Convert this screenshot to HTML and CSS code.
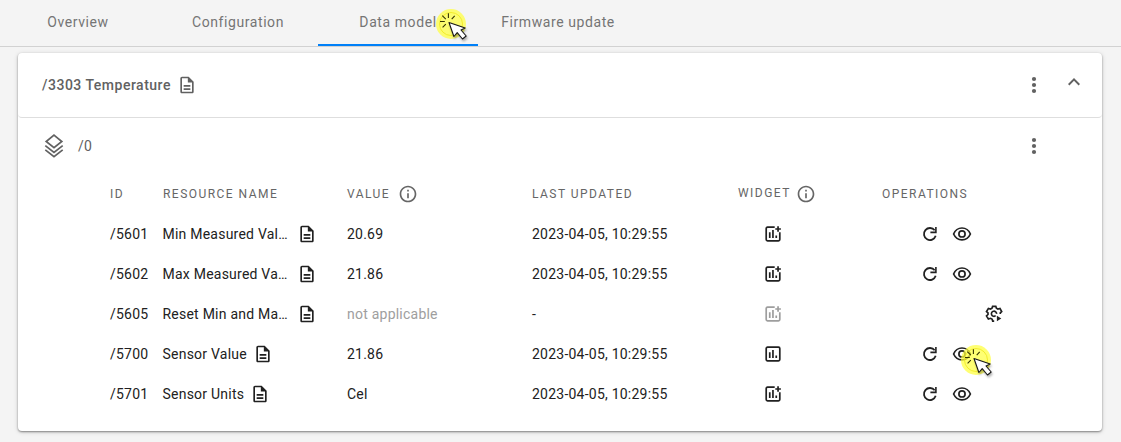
FILE: index.html
```html
<!DOCTYPE html>
<html lang="en">
<head>
<meta charset="utf-8">
<title>Data model</title>
<link rel="stylesheet" href="styles.css">
</head>
<body>
<svg class="defs" width="0" height="0">
  <symbol id="doc" viewBox="0 0 24 24"><path d="M8 16h8v2H8zm0-4h8v2H8zm6-10H6c-1.100 0-2 .9-2 2v16c0 1.100.89 2 2 2H18c1.100 0 2-.9 2-2V8l-6-6zm4 18H6V4h7v5h5v11z"/></symbol>
  <symbol id="dots" viewBox="0 0 24 24"><circle cx="12" cy="6" r="2.100"/><circle cx="12" cy="12" r="2.100"/><circle cx="12" cy="18" r="2.100"/></symbol>
  <symbol id="up" viewBox="0 0 24 24"><path d="M12 8l-6 6 1.410 1.410L12 10.830l4.590 4.580L18 14z"/></symbol>
  <symbol id="layers" viewBox="0 0 24 24"><g fill="none" stroke="currentColor" stroke-width="1.700"><path d="M12 1.200L19.800 7.500L12 13.700L4.200 7.500z"/><path d="M3.300 11.600L12 18.400L20.700 11.600M3.300 15.900L12 22.700L20.700 15.900"/></g></symbol>
  <symbol id="info" viewBox="0 0 24 24"><path d="M11 7h2v2h-2zm0 4h2v6h-2zm1-9C6.480 2 2 6.480 2 12s4.480 10 10 10 10-4.480 10-10S17.520 2 12 2zm0 18c-4.410 0-8-3.590-8-8s3.590-8 8-8 8 3.590 8 8-3.590 8-8 8z"/></symbol>
  <symbol id="chart" viewBox="0 0 16 16"><rect x="1.200" y="1.200" width="13.600" height="13.600" rx="1.300" fill="none" stroke="currentColor" stroke-width="1.700"/><path d="M3.900 6.300h1.700V12H3.900zM7.100 4h1.700v8H7.100zM10.400 9.500h1.700V12h-1.700z"/></symbol>
  <symbol id="chart-add" viewBox="0 0 16 16"><path d="M9.700 1.200H2.500Q1.200 1.200 1.200 2.500v11q0 1.300 1.300 1.300h11q1.300 0 1.300-1.300V6.300" fill="none" stroke="currentColor" stroke-width="1.700"/><path d="M3.900 6.300h1.700V12H3.900zM7.100 4h1.700v8H7.100zM10.400 9.500h1.700V12h-1.700zM12.200.3h1.700v1.900h2v1.600h-2v1.900h-1.700V3.800h-1.900V2.200h1.900z"/></symbol>
  <symbol id="refresh" viewBox="0 0 16 16"><path d="M12.700 4.300A6 6 0 1 0 13.700 9.800" fill="none" stroke="currentColor" stroke-width="1.800"/><path d="M13.100.9h1.600v6.300H8.400V5.500h4.700z"/></symbol>
  <symbol id="eye" viewBox="0 0 20 16"><path d="M1.600 8C5-0 15-0 18.400 8C15 15.700 5 15.700 1.600 8z" fill="none" stroke="currentColor" stroke-width="1.700"/><circle cx="10" cy="7.900" r="3.100" fill="none" stroke="currentColor" stroke-width="1.700"/></symbol>
  <symbol id="gear" viewBox="0 0 18 18"><path d="M9.200 16.200H7.700L7.200 14.200L5.600 13.300L3.400 14L1.500 10.900L3 9.500V7.900L1.500 6.500L3.400 3.500L5.500 4.100L7 3.200L7.600 1.300H10.800L11.400 3.200L12.900 4.100L15 3.500L16.700 6.500L15.300 7.900V8.900" fill="none" stroke="currentColor" stroke-width="1.700"/><path d="M10.700 10.700A2.600 2.600 0 1 1 11.600 8.900" fill="none" stroke="currentColor" stroke-width="1.600"/><path d="M11.900 10.700L16.300 13.500L11.900 16.300z"/></symbol>
  <symbol id="click" viewBox="0 0 36 36"><circle cx="16" cy="16" r="15" fill="#ffff3d" fill-opacity=".72"/><circle cx="16" cy="16" r="11.500" fill="none" stroke="#eee614" stroke-opacity=".75"/><path d="M13.400 5.300V10M7.300 7.700l3.500 3.500M19.700 7.900l-3 3.200M5 13.500h4.800M7.600 19.300l3.200-3.200" fill="none" stroke="#333300" stroke-width="1.100"/><path class="cursor" d="M14 14.500L18.900 28.500L22.200 24.700L27.500 31L31.200 28L26 22L30.200 20.100z" fill="#fff" stroke="#181818" stroke-width="1.100" stroke-linejoin="round"/></symbol>
</svg>

<nav class="tabs">
  <a class="tab">Overview</a>
  <a class="tab">Configuration</a>
  <a class="tab active">Data model<svg class="pointer pointer-tab"><use href="#click"/></svg></a>
  <a class="tab">Firmware update</a>
</nav>

<main class="card">
  <header class="object">
    <span class="title">/3303 Temperature</span>
    <svg class="doc"><use href="#doc"/></svg>
    <svg class="i24 menu"><use href="#dots"/></svg>
    <svg class="i24 collapse"><use href="#up"/></svg>
  </header>
  <section class="instance">
    <svg class="i24"><use href="#layers"/></svg>
    <span class="path">/0</span>
    <svg class="i24 menu"><use href="#dots"/></svg>
  </section>
  <section class="table">
    <div class="row head">
      <span>ID</span><span>RESOURCE NAME</span>
      <span class="cell">VALUE<svg class="info"><use href="#info"/></svg></span>
      <span>LAST UPDATED</span>
      <span class="cell widget-head"><span class="label">WIDGET</span><svg class="info"><use href="#info"/></svg></span>
      <span>OPERATIONS</span>
    </div>
    <div class="row">
      <span>/5601</span><span class="cell resource"><span class="name long">Min Measured Val…</span><svg class="doc"><use href="#doc"/></svg></span>
      <span>20.69</span><span>2023-04-05, 10:29:55</span>
      <span class="widget"><svg class="i16"><use href="#chart-add"/></svg></span>
      <span class="ops"><svg class="i16"><use href="#refresh"/></svg><svg class="eye"><use href="#eye"/></svg></span>
    </div>
    <div class="row">
      <span>/5602</span><span class="cell resource"><span class="name long">Max Measured Va…</span><svg class="doc"><use href="#doc"/></svg></span>
      <span>21.86</span><span>2023-04-05, 10:29:55</span>
      <span class="widget"><svg class="i16"><use href="#chart-add"/></svg></span>
      <span class="ops"><svg class="i16"><use href="#refresh"/></svg><svg class="eye"><use href="#eye"/></svg></span>
    </div>
    <div class="row">
      <span>/5605</span><span class="cell resource"><span class="name long">Reset Min and Ma…</span><svg class="doc"><use href="#doc"/></svg></span>
      <span class="muted">not applicable</span><span>-</span>
      <span class="widget muted"><svg class="i16"><use href="#chart-add"/></svg></span>
      <span class="ops"><svg class="gear"><use href="#gear"/></svg></span>
    </div>
    <div class="row">
      <span>/5700</span><span class="cell resource"><span class="name">Sensor Value</span><svg class="doc"><use href="#doc"/></svg></span>
      <span>21.86</span><span>2023-04-05, 10:29:55</span>
      <span class="widget"><svg class="i16"><use href="#chart"/></svg></span>
      <span class="ops"><svg class="i16"><use href="#refresh"/></svg><svg class="eye"><use href="#eye"/></svg><svg class="pointer pointer-row"><use href="#click"/></svg></span>
    </div>
    <div class="row">
      <span>/5701</span><span class="cell resource"><span class="name">Sensor Units</span><svg class="doc"><use href="#doc"/></svg></span>
      <span>Cel</span><span>2023-04-05, 10:29:55</span>
      <span class="widget"><svg class="i16"><use href="#chart-add"/></svg></span>
      <span class="ops"><svg class="i16"><use href="#refresh"/></svg><svg class="eye"><use href="#eye"/></svg></span>
    </div>
  </section>
</main>
</body>
</html>
```
FILE: styles.css
```css
* { box-sizing: border-box; }
body {
  margin: 0;
  height: 442px;
  overflow: hidden;
  background: #f4f4f4;
  color: #212121;
  font: 14px/20px Roboto, sans-serif;
  letter-spacing: 0.23px;
}
svg { display: block; flex: none; fill: currentColor; }
.defs { position: absolute; }
.i24 { width: 24px; height: 24px; }
.i16 { width: 16px; height: 16px; }
.doc { width: 20px; height: 20px; }
.info { width: 20px; height: 20px; }
.eye { width: 20px; height: 16px; }
.gear { width: 18px; height: 18px; margin-left: 63px; }

.tabs {
  display: flex;
  height: 47px;
  margin-left: -2px;
  border-bottom: 1px solid #d2d2d2;
}
.tab {
  position: relative;
  width: 160px;
  height: 46px;
  padding-top: 12px;
  text-align: center;
  color: #757575;
  letter-spacing: 0.58px;
}
.active { border-bottom: 2px solid #0080f8; }
.pointer {
  position: absolute;
  width: 36px;
  height: 36px;
  overflow: visible;
}
.pointer-tab { left: 117px; top: 8px; }
.pointer-row { left: 78px; top: -2px; }
.cursor { filter: drop-shadow(1px 2px 1px rgba(0, 0, 0, 0.3)); }

.card {
  width: 1084px;
  height: 378px;
  margin: 6px 0 0 18px;
  background: #fff;
  border-radius: 4px;
  box-shadow: 0 1px 2px rgba(0, 0, 0, 0.4), 0 1px 5px rgba(0, 0, 0, 0.16);
}
.object {
  display: flex;
  align-items: center;
  height: 65px;
  padding: 0 16px 1px 24px;
  border-bottom: 1px solid #dedede;
  border-radius: 4px;
  color: #616161;
}
.title { font-weight: 500; letter-spacing: 0.5px; margin-right: 6px; }
.menu { margin-left: auto; }
.collapse { margin: 0 0 5px 16px; }
.instance {
  display: flex;
  align-items: center;
  height: 56px;
  padding: 0 56px 0 24px;
  color: #616161;
}
.path { margin-left: 12px; }
.row {
  display: grid;
  grid-template-columns: 53px 184px 185px 206px 144px 1fr;
  align-items: center;
  height: 40px;
  padding-left: 92px;
}
.head { font-size: 12px; letter-spacing: 1.47px; color: #666; }
.cell { display: flex; align-items: center; }
.resource { margin-left: -0.5px; }
.head .info { margin-left: 8px; }
.widget-head .info { margin-left: 5px; }
.label { padding-bottom: 2px; }
.name { margin-right: 6px; white-space: nowrap; }
.long { width: 128.5px; }
.muted { color: #9e9e9e; }
.widget { padding-left: 27px; }
.ops {
  position: relative;
  display: flex;
  align-items: center;
  gap: 14px;
  padding-left: 40px;
}
```
